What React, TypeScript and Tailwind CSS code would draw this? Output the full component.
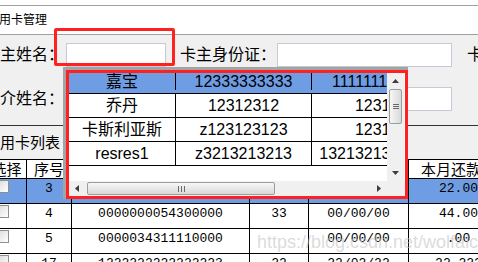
import React from 'react';

const sans = "font-['Liberation_Sans','Noto_Sans_CJK_SC',sans-serif]";
const mono = "font-['Liberation_Mono','Noto_Sans_CJK_SC',monospace]";

const picks = [
  ['嘉宝', '12333333333', '111111111111111'],
  ['乔丹', '12312312', '12312312'],
  ['卡斯利亚斯', 'z123123123', '12312312'],
  ['resres1', 'z3213213213', '1321321321321321'],
];

const rows = [
  { no: '3', card: '', cnt: '', date: '', pay: '22.00', sel: true },
  { no: '4', card: '0000000054300000', cnt: '33', date: '00/00/00', pay: '44.00' },
  { no: '5', card: '0000034311110000', cnt: '', date: '00/00/00', pay: '.00' },
  { no: '17', card: '1222222222222223', cnt: '22', date: '22/02/22', pay: '22.222' },
];

const TextBox = ({ w }: { w: string }) => (
  <div className={`${w} h-[24px] shrink-0 bg-white border border-[#c4cbd6]`} />
);

const Arrow = ({ dir }: { dir: 'up' | 'down' | 'left' | 'right' }) => {
  const pts = {
    up: '0,4 7,4 3.5,0',
    down: '0,0 7,0 3.5,4',
    left: '4,0 4,7 0,3.5',
    right: '0,0 0,7 4,3.5',
  }[dir];
  const vert = dir === 'up' || dir === 'down';
  return (
    <svg width={vert ? 7 : 4} height={vert ? 4 : 7} viewBox={vert ? '0 0 7 4' : '0 0 4 7'}>
      <polygon points={pts} fill="#3c3c3c" />
    </svg>
  );
};

const VScroll = () => (
  <div className="w-[17px] h-full shrink-0 bg-[#f0f0f0] flex flex-col items-center">
    <div className="h-[16px] flex items-center justify-center">
      <Arrow dir="up" />
    </div>
    <div className="w-[13px] h-[35px] rounded-[2px] border border-[#9d9d9d] bg-gradient-to-r from-[#f7f7f7] to-[#d9d9d9] flex flex-col items-center justify-center gap-[1px]">
      <div className="w-[6px] h-px bg-[#6a6a6a]" />
      <div className="w-[6px] h-px bg-[#6a6a6a]" />
      <div className="w-[6px] h-px bg-[#6a6a6a]" />
    </div>
    <div className="flex-1" />
    <div className="h-[16px] flex items-center justify-center">
      <Arrow dir="down" />
    </div>
  </div>
);

const HScroll = () => (
  <div className="h-[15px] flex bg-[#f0f0f0]">
    <div className="w-[318px] flex items-center">
      <div className="w-[16px] flex items-center justify-center">
        <Arrow dir="left" />
      </div>
      <div className="ml-[2px] w-[188px] h-[13px] rounded-[2px] border border-[#9d9d9d] bg-gradient-to-b from-[#f7f7f7] to-[#d9d9d9] flex items-center justify-center gap-[2px]">
        <div className="w-px h-[6px] bg-[#6a6a6a]" />
        <div className="w-px h-[6px] bg-[#6a6a6a]" />
        <div className="w-px h-[6px] bg-[#6a6a6a]" />
      </div>
      <div className="flex-1" />
      <div className="w-[16px] flex items-center justify-center">
        <Arrow dir="right" />
      </div>
    </div>
    <div className="flex-1 bg-[#f0f0f0]" />
  </div>
);

const PickList = () => (
  <div className="absolute left-[63px] top-[67px] border-l-[3px] border-t-[3px] border-[#a4a4a4]">
    <div className={`w-[342px] h-[129px] border-[3px] border-[#ff2020] bg-white flex flex-col ${sans}`}>
      <div className="h-[108px] flex">
        <div className="w-[318px] overflow-hidden">
          {picks.map((p, i) => (
            <div
              key={p[0]}
              className={`flex w-[400px] border-b border-black text-[16px] whitespace-nowrap ${
                i === 0 ? 'h-[21px] bg-[#6f9de3] pb-[3px]' : 'h-[24px]'
              }`}
            >
              <div className="w-[107px] shrink-0 border-r border-black flex items-center justify-center">{p[0]}</div>
              <div className="w-[136px] shrink-0 border-r border-black flex items-center justify-center">{p[1]}</div>
              <div className="w-[157px] shrink-0 flex items-center justify-center">{p[2]}</div>
            </div>
          ))}
        </div>
        <VScroll />
        <div className="w-px" />
      </div>
      <HScroll />
    </div>
  </div>
);

const CheckBox = () => (
  <div className="ml-[9px] mt-[1px] w-[13px] h-[13px] border border-[#8e8f8f] bg-gradient-to-br from-[#dadada] to-white" />
);

export default function App() {
  return (
    <div className={`relative w-[478px] h-[262px] overflow-hidden bg-[#f0f0f0] text-black ${sans}`}>
      <div className="h-[6px] bg-white border-b border-[#a0a0a0]" />
      <div className="h-[29px] bg-white border-b border-[#a0a0a0] flex items-center whitespace-nowrap">
        <span className="ml-[-13px] text-[12px] leading-[14px]">信用卡管理</span>
      </div>

      <div className="h-[91px] pt-[8px] flex flex-col gap-[20px] border-b border-[#333] text-[16px] whitespace-nowrap">
        <div className="h-[24px] flex items-center">
          <span className="ml-[-16px] w-[82px] shrink-0">卡主姓名：</span>
          <TextBox w="w-[100px]" />
          <span className="ml-[14px] w-[97px] shrink-0">卡主身份证：</span>
          <TextBox w="w-[175px]" />
          <span className="ml-[15px] shrink-0">卡号：</span>
        </div>
        <div className="h-[24px] flex items-center">
          <span className="ml-[-16px] w-[82px] shrink-0">中介姓名：</span>
          <TextBox w="w-[100px]" />
          <div className="ml-[111px]">
            <TextBox w="w-[175px]" />
          </div>
        </div>
      </div>

      <div className="h-[33px] flex items-center whitespace-nowrap">
        <span className="ml-[-15px] text-[15px] leading-[18px]">信用卡列表</span>
        <div className="ml-[2px] w-[6px] h-px bg-[#d0d0d0]" />
      </div>

      <table className="ml-[-14px] border-collapse table-fixed w-[522px]">
        <colgroup>
          <col className="w-[40px]" />
          <col className="w-[45px]" />
          <col className="w-[178px]" />
          <col className="w-[59px]" />
          <col className="w-[100px]" />
          <col className="w-[100px]" />
        </colgroup>
        <thead>
          <tr className="h-[19px] bg-white text-[15px] leading-[17px] whitespace-nowrap">
            <th className="border border-black font-normal">选择</th>
            <th className="border border-black font-normal">序号</th>
            <th className="border border-black font-normal" />
            <th className="border border-black font-normal" />
            <th className="border border-black font-normal" />
            <th className="border border-black font-normal">本月还款额</th>
          </tr>
        </thead>
        <tbody className={`${mono} text-[13px] leading-[18px]`}>
          {rows.map(r => (
            <tr key={r.no} className={`h-[25px] ${r.sel ? 'bg-[#6f9de3]' : 'bg-white'}`}>
              <td className="border border-black align-top p-0">
                <CheckBox />
              </td>
              <td className="border border-black align-top text-center pt-[1px]">{r.no}</td>
              <td className="border border-black align-top text-center pt-[1px]">{r.card}</td>
              <td className="border border-black align-top text-center pt-[1px]">{r.cnt}</td>
              <td className="border border-black align-top text-center pt-[1px]">{r.date}</td>
              <td className="border border-black align-top text-center pt-[1px]">{r.pay}</td>
            </tr>
          ))}
        </tbody>
      </table>

      {/* red markup frame around the name box */}
      <div className="absolute left-[54px] top-[28px] w-[121px] h-[38px] border-[3px] border-[#ff2020] rounded-[2px]" />

      <PickList />

      <div className="absolute left-[257px] top-[231px] text-[18px] leading-[22px] text-[#c4c4c4]/60 whitespace-nowrap">
        https://blog.csdn.net/wolfalcon
      </div>
    </div>
  );
}
